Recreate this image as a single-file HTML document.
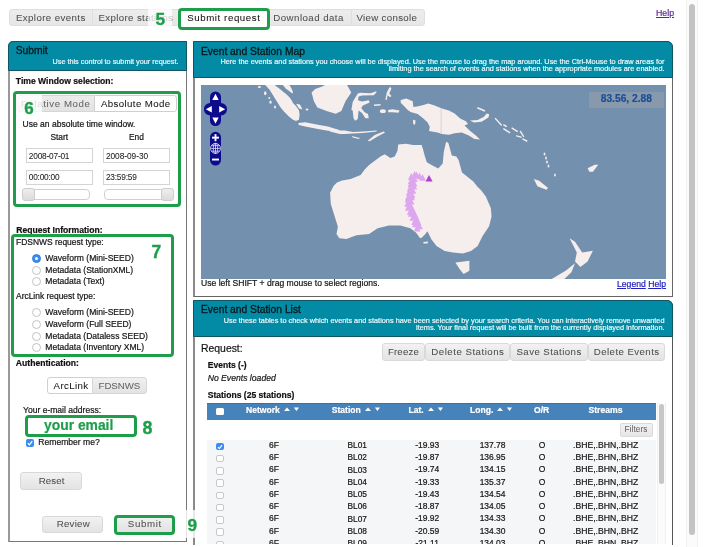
<!DOCTYPE html>
<html><head><meta charset="utf-8">
<style>
*{box-sizing:border-box;margin:0;padding:0}
html,body{will-change:transform;width:705px;height:547px;overflow:hidden;background:#fff;font-family:"Liberation Sans",sans-serif;color:#222}
.a{position:absolute;white-space:nowrap;-webkit-text-stroke:0.2px currentColor}
.g{-webkit-text-stroke:0.6px currentColor}
</style></head><body>
<div class="a" style="left:9px;top:9px;width:84px;height:17px;background:linear-gradient(#ededed,#e6e6e6);border:1px solid #dedede;border-radius:3px 0 0 3px"></div>
<div class="a" style="left:92px;top:9px;width:87px;height:17px;background:linear-gradient(#ededed,#e6e6e6);border:1px solid #dedede;"></div>
<div class="a" style="left:15.9px;top:12.76px;font-size:9.700px;line-height:9.700px;font-weight:normal;color:#4e4e4e;font-style:normal;letter-spacing:0.410px;-webkit-text-stroke:0.05px currentColor">Explore events</div>
<div class="a" style="left:98.4px;top:12.76px;font-size:9.700px;line-height:9.700px;font-weight:normal;color:#4e4e4e;font-style:normal;letter-spacing:0.372px;-webkit-text-stroke:0.05px currentColor">Explore stations</div>
<div class="a" style="left:148px;top:9px;width:23.5px;height:17.5px;background:rgba(255,255,255,.75)"></div>
<div class="a" style="left:156px;top:20.15px;font-size:1.000px;line-height:1.000px;font-weight:normal;color:#151515;font-style:normal;"></div>
<div class="a" style="left:268px;top:9px;width:84px;height:17px;background:linear-gradient(#ededed,#e6e6e6);border:1px solid #dedede;"></div>
<div class="a" style="left:351px;top:9px;width:74px;height:17px;background:linear-gradient(#ededed,#e6e6e6);border:1px solid #dedede;border-radius:0 3px 3px 0"></div>
<div class="a" style="left:273.3px;top:12.76px;font-size:9.700px;line-height:9.700px;font-weight:normal;color:#4e4e4e;font-style:normal;letter-spacing:0.454px;-webkit-text-stroke:0.05px currentColor">Download data</div>
<div class="a" style="left:356.5px;top:12.76px;font-size:9.700px;line-height:9.700px;font-weight:normal;color:#4e4e4e;font-style:normal;letter-spacing:0.319px;-webkit-text-stroke:0.05px currentColor">View console</div>
<div class="a" style="left:178px;top:8px;width:92px;height:22px;background:#fff;border:3px solid #1e9e4a;border-radius:4px"></div>
<div class="a" style="left:187.2px;top:12.76px;font-size:9.700px;line-height:9.700px;font-weight:normal;color:#111;font-style:normal;letter-spacing:0.582px;-webkit-text-stroke:0.05px currentColor">Submit request</div>
<div class="a" style="left:155.6px;top:10.99px;font-size:17.300px;line-height:17.300px;font-weight:bold;color:#1e9e4a;font-style:normal;-webkit-text-stroke:0.35px currentColor">5</div>
<div class="a" style="left:656px;top:9.12px;font-size:8.800px;line-height:8.800px;font-weight:normal;color:#5a2b8f;font-style:normal;text-decoration:underline">Help</div>
<div class="a" style="left:686px;top:0px;width:12px;height:547px;background:#fbfbfb;border-left:1px solid #f0f0f0;border-right:1px solid #f0f0f0"></div>
<div class="a" style="left:689px;top:4px;width:6px;height:531px;background:#c3c3c3;border-radius:3px"></div>
<div class="a" style="left:8px;top:41px;width:179px;height:501px;border:1px solid #777;border-left:2px solid #999;border-radius:5px 0 0 0"></div>
<div class="a" style="left:8px;top:41px;width:179px;height:30px;background:#038aa4;border-radius:5px 0 0 0;border:1px solid #0e5663"></div>
<div class="a" style="left:15.7px;top:46.45px;font-size:10.300px;line-height:10.300px;font-weight:normal;color:#07181c;font-style:normal;-webkit-text-stroke:0.3px currentColor">Submit</div>
<div class="a" style="left:-521.50px;top:58.12px;width:700px;text-align:right;font-size:7.270px;line-height:7.270px;font-weight:normal;color:#e9f7f9;">Use this control to submit your request.</div>
<div class="a" style="left:15.8px;top:77.19px;font-size:8.600px;line-height:8.600px;font-weight:bold;color:#111;font-style:normal;">Time Window selection:</div>
<div class="a" style="left:13px;top:91px;width:168px;height:116px;border:3px solid #1e9e4a;border-radius:4px"></div>
<div class="a" style="left:16px;top:95px;width:79px;height:17px;background:linear-gradient(#ececec,#e2e2e2);border:1px solid #d6d6d6;border-radius:3px 0 0 3px"></div>
<div class="a" style="left:20.900000000000006px;top:99.45px;font-size:9.700px;line-height:9.700px;font-weight:normal;color:#666;font-style:normal;letter-spacing:0.593px;-webkit-text-stroke:0.05px currentColor">Relative Mode</div>
<div class="a" style="left:16px;top:95px;width:26px;height:17px;background:rgba(255,255,255,.8)"></div>
<div class="a" style="left:94px;top:95px;width:83px;height:17px;background:#fff;border:1px solid #cfcfcf;border-radius:0 3px 3px 0"></div>
<div class="a" style="left:101.0px;top:99.45px;font-size:9.700px;line-height:9.700px;font-weight:normal;color:#151515;font-style:normal;letter-spacing:0.367px;-webkit-text-stroke:0.05px currentColor">Absolute Mode</div>
<div class="a" style="left:24.2px;top:99.85px;font-size:17.000px;line-height:17.000px;font-weight:bold;color:#1e9e4a;font-style:normal;-webkit-text-stroke:0.35px currentColor">6</div>
<div class="a" style="left:22.5px;top:119.74px;font-size:8.540px;line-height:8.540px;font-weight:normal;color:#151515;font-style:normal;">Use an absolute time window.</div>
<div class="a" style="left:50.4px;top:132.88px;font-size:8.380px;line-height:8.380px;font-weight:normal;color:#151515;font-style:normal;">Start</div>
<div class="a" style="left:129px;top:132.88px;font-size:8.380px;line-height:8.380px;font-weight:normal;color:#151515;font-style:normal;">End</div>
<div class="a" style="left:26px;top:148px;width:67px;height:15px;background:#fff;border:1px solid #d4d4d4;"></div>
<div class="a" style="left:28.8px;top:151.64px;font-size:8.300px;line-height:8.300px;font-weight:normal;color:#222;font-style:normal;letter-spacing:-0.195px;-webkit-text-stroke:0.05px currentColor">2008-07-01</div>
<div class="a" style="left:103px;top:148px;width:67px;height:15px;background:#fff;border:1px solid #d4d4d4;"></div>
<div class="a" style="left:105.9px;top:151.64px;font-size:8.300px;line-height:8.300px;font-weight:normal;color:#222;font-style:normal;letter-spacing:-0.017px;-webkit-text-stroke:0.05px currentColor">2008-09-30</div>
<div class="a" style="left:26px;top:170px;width:67px;height:15px;background:#fff;border:1px solid #d4d4d4;"></div>
<div class="a" style="left:28.8px;top:172.94px;font-size:8.300px;line-height:8.300px;font-weight:normal;color:#222;font-style:normal;letter-spacing:-0.218px;-webkit-text-stroke:0.05px currentColor">00:00:00</div>
<div class="a" style="left:103px;top:170px;width:67px;height:15px;background:#fff;border:1px solid #d4d4d4;"></div>
<div class="a" style="left:105.9px;top:172.94px;font-size:8.300px;line-height:8.300px;font-weight:normal;color:#222;font-style:normal;letter-spacing:-0.204px;-webkit-text-stroke:0.05px currentColor">23:59:59</div>
<div class="a" style="left:22px;top:189px;width:68px;height:11px;background:#fff;border:1px solid #cfcfcf;border-radius:4px;"></div>
<div class="a" style="left:22px;top:188px;width:13px;height:13px;background:linear-gradient(#eee,#dcdcdc);border:1px solid #cdcdcd;border-radius:3px;"></div>
<div class="a" style="left:104px;top:189px;width:69px;height:11px;background:#fff;border:1px solid #cfcfcf;border-radius:4px;"></div>
<div class="a" style="left:161px;top:188px;width:13px;height:13px;background:linear-gradient(#eee,#dcdcdc);border:1px solid #cdcdcd;border-radius:3px;"></div>
<div class="a" style="left:16.3px;top:225.71px;font-size:8.580px;line-height:8.580px;font-weight:bold;color:#111;font-style:normal;">Request Information:</div>
<div class="a" style="left:11px;top:234px;width:163px;height:123px;border:3px solid #1e9e4a;border-radius:4px"></div>
<div class="a" style="left:16px;top:238.32px;font-size:8.450px;line-height:8.450px;font-weight:normal;color:#151515;font-style:normal;">FDSNWS request type:</div>
<div class="a" style="left:151.6px;top:244.43px;font-size:17.500px;line-height:17.500px;font-weight:bold;color:#1e9e4a;font-style:normal;-webkit-text-stroke:0.35px currentColor">7</div>
<div class="a" style="left:31.5px;top:253.8px;width:9.0px;height:9.0px;background:#3b8cf0;border-radius:50%;border:1px solid #2f7de0"></div>
<div class="a" style="left:34.5px;top:256.8px;width:3.0px;height:3.0px;background:#fff;border-radius:50%"></div>
<div class="a" style="left:45.3px;top:253.92px;font-size:8.560px;line-height:8.560px;font-weight:normal;color:#151515;font-style:normal;">Waveform (Mini-SEED)</div>
<div class="a" style="left:31.5px;top:265.5px;width:9.0px;height:9.0px;background:#fff;border-radius:50%;border:1px solid #c2c2c2"></div>
<div class="a" style="left:45.3px;top:265.62px;font-size:8.560px;line-height:8.560px;font-weight:normal;color:#151515;font-style:normal;">Metadata (StationXML)</div>
<div class="a" style="left:31.5px;top:277.2px;width:9.0px;height:9.0px;background:#fff;border-radius:50%;border:1px solid #c2c2c2"></div>
<div class="a" style="left:45.3px;top:277.32px;font-size:8.560px;line-height:8.560px;font-weight:normal;color:#151515;font-style:normal;">Metadata (Text)</div>
<div class="a" style="left:31.5px;top:308.1px;width:9.0px;height:9.0px;background:#fff;border-radius:50%;border:1px solid #c2c2c2"></div>
<div class="a" style="left:45.3px;top:308.22px;font-size:8.560px;line-height:8.560px;font-weight:normal;color:#151515;font-style:normal;">Waveform (Mini-SEED)</div>
<div class="a" style="left:31.5px;top:319.9px;width:9.0px;height:9.0px;background:#fff;border-radius:50%;border:1px solid #c2c2c2"></div>
<div class="a" style="left:45.3px;top:320.02px;font-size:8.560px;line-height:8.560px;font-weight:normal;color:#151515;font-style:normal;">Waveform (Full SEED)</div>
<div class="a" style="left:31.5px;top:331.5px;width:9.0px;height:9.0px;background:#fff;border-radius:50%;border:1px solid #c2c2c2"></div>
<div class="a" style="left:45.3px;top:331.62px;font-size:8.560px;line-height:8.560px;font-weight:normal;color:#151515;font-style:normal;">Metadata (Dataless SEED)</div>
<div class="a" style="left:31.5px;top:342.9px;width:9.0px;height:9.0px;background:#fff;border-radius:50%;border:1px solid #c2c2c2"></div>
<div class="a" style="left:45.3px;top:343.02px;font-size:8.560px;line-height:8.560px;font-weight:normal;color:#151515;font-style:normal;">Metadata (Inventory XML)</div>
<div class="a" style="left:16px;top:292.42px;font-size:8.450px;line-height:8.450px;font-weight:normal;color:#151515;font-style:normal;">ArcLink request type:</div>
<div class="a" style="left:15.8px;top:358.67px;font-size:8.620px;line-height:8.620px;font-weight:bold;color:#111;font-style:normal;">Authentication:</div>
<div class="a" style="left:47px;top:377px;width:46px;height:17px;background:#fff;border:1px solid #d0d0d0;border-radius:3px 0 0 3px"></div>
<div class="a" style="left:92px;top:377px;width:55px;height:17px;background:linear-gradient(#efefef,#e3e3e3);border:1px solid #d6d6d6;border-radius:0 3px 3px 0"></div>
<div class="a" style="left:53.6px;top:381.06px;font-size:9.700px;line-height:9.700px;font-weight:normal;color:#151515;font-style:normal;letter-spacing:0.367px;-webkit-text-stroke:0.05px currentColor">ArcLink</div>
<div class="a" style="left:98.6px;top:381.06px;font-size:9.700px;line-height:9.700px;font-weight:normal;color:#666;font-style:normal;letter-spacing:-0.070px;-webkit-text-stroke:0.05px currentColor">FDSNWS</div>
<div class="a" style="left:23px;top:405.72px;font-size:8.560px;line-height:8.560px;font-weight:normal;color:#151515;font-style:normal;">Your e-mail address:</div>
<div class="a" style="left:25px;top:415px;width:112px;height:22px;border:3px solid #1e9e4a;border-radius:4px;background:#fff"></div>
<div class="a" style="left:44px;top:418.52px;font-size:13.860px;line-height:13.860px;font-weight:bold;color:#1e9e4a;font-style:normal;">your email</div>
<div class="a" style="left:142.6px;top:419.87px;font-size:17.800px;line-height:17.800px;font-weight:bold;color:#1e9e4a;font-style:normal;-webkit-text-stroke:0.35px currentColor">8</div>
<div class="a" style="left:26px;top:439px;width:8px;height:8px;background:#3b8cf0;border-radius:2px"></div>
<svg class="a" style="left:26px;top:439px" width="8" height="8"><path d="M1.8 4.2 L3.4 5.8 L6.3 2.2" stroke="#fff" stroke-width="1.3" fill="none"/></svg>
<div class="a" style="left:38.3px;top:438.32px;font-size:8.570px;line-height:8.570px;font-weight:normal;color:#151515;font-style:normal;">Remember me?</div>
<div class="a" style="left:20px;top:472px;width:62px;height:18px;background:linear-gradient(#f2f2f2,#e3e3e3);border:1px solid #d9d9d9;border-radius:3px;"></div>
<div class="a" style="left:38.7px;top:476.06px;font-size:9.700px;line-height:9.700px;font-weight:normal;color:#4e4e4e;font-style:normal;letter-spacing:0.121px;-webkit-text-stroke:0.05px currentColor">Reset</div>
<div class="a" style="left:42px;top:516px;width:61px;height:17px;background:linear-gradient(#f2f2f2,#e3e3e3);border:1px solid #d9d9d9;border-radius:3px;"></div>
<div class="a" style="left:56.7px;top:518.55px;font-size:9.700px;line-height:9.700px;font-weight:normal;color:#4e4e4e;font-style:normal;letter-spacing:0.237px;-webkit-text-stroke:0.05px currentColor">Review</div>
<div class="a" style="left:114px;top:515px;width:61px;height:20px;background:linear-gradient(#f0f0f0,#e2e2e2);border:3px solid #1e9e4a;border-radius:4px"></div>
<div class="a" style="left:127.8px;top:518.75px;font-size:9.700px;line-height:9.700px;font-weight:normal;color:#4e4e4e;font-style:normal;letter-spacing:0.667px;-webkit-text-stroke:0.05px currentColor">Submit</div>
<div class="a" style="left:193px;top:41px;width:480px;height:256px;border:1px solid #666;border-left:2px solid #8a8a8a;border-radius:0 6px 0 0"></div>
<div class="a" style="left:193px;top:41px;width:480px;height:37px;background:#038aa4;border-radius:0 6px 0 0;border:1px solid #0e5663"></div>
<div class="a" style="left:201px;top:46.86px;font-size:10.280px;line-height:10.280px;font-weight:normal;color:#07181c;font-style:normal;-webkit-text-stroke:0.3px currentColor">Event and Station Map</div>
<div class="a" style="left:-35.50px;top:57.97px;width:700px;text-align:right;font-size:7.330px;line-height:7.330px;font-weight:normal;color:#e9f7f9;">Here the events and stations you choose will be displayed. Use the mouse to drag the map around. Use the Ctrl-Mouse to draw areas for</div>
<div class="a" style="left:-35.50px;top:65.47px;width:700px;text-align:right;font-size:7.330px;line-height:7.330px;font-weight:normal;color:#e9f7f9;">limiting the search of events and stations when the appropriate modules are enabled.</div>
<svg class="a" style="left:201px;top:85px" width="465" height="194" viewBox="201 85 465 194"><rect x="201" y="85" width="465" height="194" fill="#7391ae"/><polygon fill="#f6eded" points="265.2,85.0 269.6,89.8 273.3,95.7 276.9,101.5 280.6,107.4 284.2,111.8 288.6,116.2 293.0,119.8 295.9,120.9 298.9,119.8 299.6,114.7 298.9,110.3 295.9,105.9 293.0,103.0 291.5,100.1 289.4,97.2 286.4,94.2 283.5,92.0 279.9,89.1 276.2,86.2 274.7,85.0"/><polygon fill="#f6eded" points="296.0,103.7 300.0,104.5 302.5,109.6 299.0,108.5"/><polygon fill="#f6eded" points="282.8,85.0 289.4,85.0 291.5,88.4 293.0,92.0 292.3,93.5 289.4,91.3 285.7,88.4"/><polygon fill="#f6eded" points="298.2,123.0 305.2,122.3 316.6,124.4 327.9,126.6 339.3,130.1 339.3,132.2 327.9,130.8 316.6,128.7 305.2,126.6 298.9,125.1"/><polygon fill="#f6eded" points="311.6,92.5 315.2,89.0 321.6,86.8 325.1,85.0 347.0,85.0 351.3,92.5 345.6,101.0 341.3,111.0 335.7,113.8 326.5,110.9 317.3,107.4 313.8,101.0"/><polygon fill="#f6eded" points="330.0,127.9 334.0,128.9 339.9,130.4 344.9,130.4 352.8,131.9 362.8,131.4 376.7,130.4 376.7,131.6 362.8,132.9 352.8,133.4 344.9,133.9 339.9,133.9 334.0,132.4 330.0,131.4"/><polygon fill="#f6eded" points="351.8,135.9 359.8,137.9 358.8,139.0 352.8,137.4"/><polygon fill="#f6eded" points="367.7,140.8 374.7,134.9 383.6,131.4 385.1,132.4 376.7,136.9 369.7,141.3"/><polygon fill="#f6eded" points="375.6,91.4 376.9,91.8 373.9,95.2 362.0,95.6 358.6,96.5 358.0,100.3 362.0,101.6 368.8,100.3 369.7,102.4 362.9,105.4 361.2,108.0 364.6,112.2 368.0,113.9 368.8,118.2 365.4,118.2 362.0,113.1 358.6,110.5 357.8,119.0 355.2,120.7 353.5,118.2 352.7,110.5 351.4,109.7 352.7,102.0 355.2,97.8 357.8,93.5 360.3,92.7 370.5,93.2"/><polygon fill="#f6eded" points="390.1,86.7 391.4,88.4 389.3,93.5 391.4,96.1 390.1,97.3 387.6,95.2 386.7,100.3 385.4,99.5 386.7,92.7 388.4,89.3"/><polygon fill="#f6eded" points="388.0,110.1 392.7,109.3 399.5,110.5 398.6,112.7 392.7,112.2 388.4,112.2"/><ellipse cx="382.9" cy="111.2" rx="3" ry="1.9" fill="#f6eded"/><polygon fill="#f6eded" points="374.0,104.5 380.5,104.0 380.5,105.5 374.0,106.0"/><ellipse cx="259.4" cy="87" rx="1.6" ry="1" fill="#f6eded"/><ellipse cx="265.2" cy="93.2" rx="1.2" ry="2" fill="#f6eded"/><ellipse cx="269.3" cy="98" rx="1" ry="1" fill="#f6eded"/><ellipse cx="270.5" cy="102.2" rx="1.1" ry="1.6" fill="#f6eded"/><ellipse cx="275" cy="107" rx="1" ry="1.6" fill="#f6eded"/><ellipse cx="307" cy="109.5" rx="1.4" ry="1" fill="#f6eded"/><polygon fill="#f6eded" points="400.7,99.9 406.3,98.5 412.7,101.3 413.4,107.0 418.4,106.3 423.4,104.9 428.3,103.5 434.7,105.6 441.8,108.4 448.9,110.6 454.6,113.4 460.2,118.4 465.9,121.2 468.0,124.0 464.5,125.5 470.2,131.1 475.9,135.4 480.1,139.6 474.4,138.9 468.8,135.4 461.7,132.6 454.6,133.3 448.9,134.7 441.8,134.0 437.6,132.6 433.3,131.8 429.0,131.1 429.8,126.9 427.6,122.6 423.4,118.4 417.7,114.1 410.6,112.0 407.8,109.9 403.5,105.6 400.7,102.8"/><polygon fill="#f6eded" points="413.0,119.8 415.6,120.5 415.0,124.8 413.2,124.0"/><line x1="441.1" y1="108.4" x2="441.1" y2="134" stroke="#c9bfc2" stroke-width="0.6"/><polygon fill="#f6eded" points="470.0,120.5 477.7,119.9 484.0,116.7 486.6,113.5 489.2,114.2 488.5,117.4 481.5,121.8 473.8,122.5"/><polygon fill="#f6eded" points="477.7,107.1 485.3,110.3 484.7,111.8 477.0,108.6"/><line x1="495.5" y1="118.6" x2="501.3" y2="125" stroke="#f6eded" stroke-width="1.4" stroke-linecap="round"/><line x1="503.8" y1="125" x2="506.4" y2="126.3" stroke="#f6eded" stroke-width="1.4" stroke-linecap="round"/><line x1="503.8" y1="128.8" x2="509.6" y2="132.7" stroke="#f6eded" stroke-width="1.4" stroke-linecap="round"/><line x1="512.1" y1="128.2" x2="517.3" y2="131.4" stroke="#f6eded" stroke-width="1.4" stroke-linecap="round"/><line x1="520.4" y1="131.4" x2="523.6" y2="136.5" stroke="#f6eded" stroke-width="1.4" stroke-linecap="round"/><line x1="516.6" y1="135.9" x2="521.1" y2="137.1" stroke="#f6eded" stroke-width="1.4" stroke-linecap="round"/><line x1="523" y1="139.1" x2="526.8" y2="141" stroke="#f6eded" stroke-width="1.4" stroke-linecap="round"/><polygon fill="#f6eded" points="339.3,238.2 336.5,233.9 337.9,226.8 334.4,215.5 330.8,204.1 330.1,192.8 333.7,185.7 337.0,182.5 342.2,180.6 350.7,179.1 360.6,174.9 364.9,169.2 369.1,165.0 374.8,160.7 380.5,156.4 384.7,154.3 390.4,157.9 394.7,156.4 397.5,150.8 398.2,144.4 406.0,143.7 413.1,145.1 421.6,145.1 423.0,149.3 424.5,155.0 426.8,162.2 432.5,165.6 438.2,168.5 442.7,163.4 443.8,152.0 446.1,141.8 448.4,142.9 451.8,155.4 456.3,156.6 458.6,160.0 462.0,172.4 467.7,177.0 473.3,181.5 477.9,187.2 480.9,190.0 485.8,196.6 490.8,208.1 491.6,216.3 489.1,226.2 482.6,236.1 477.6,246.0 471.0,250.9 462.8,253.4 452.9,252.6 444.7,250.9 436.5,246.0 431.5,239.4 427.4,231.2 424.9,234.4 421.6,237.7 420.2,238.2 415.9,232.5 410.3,228.2 400.3,225.4 389.0,225.4 377.6,228.2 369.1,233.9 356.4,235.3 346.4,238.9"/><polygon fill="#f6eded" points="423.3,242.0 428.2,241.6 427.5,243.5 423.5,243.6"/><polygon fill="#f6eded" points="455.4,262.4 469.4,260.8 469.4,270.7 463.6,274.0 459.5,269.0"/><polygon fill="#f6eded" points="569.6,238.2 575.0,241.8 582.2,252.5 592.9,250.7 587.6,261.5 580.4,266.9 575.0,261.5 576.8,252.5"/><polygon fill="#f6eded" points="575.0,263.3 566.0,270.4 551.7,279.0 564.3,279.0 571.4,272.2"/><polygon fill="#f6eded" points="533.8,179.0 539.2,180.8 548.1,188.0 546.3,189.8 537.4,186.2"/><polygon fill="#f6eded" points="587.6,168.3 594.7,164.7 598.3,164.7 592.9,171.8 589.4,171.8"/><ellipse cx="544.5" cy="154" rx="0.9" ry="1.6" fill="#f6eded"/><ellipse cx="546" cy="158" rx="0.9" ry="1.6" fill="#f6eded"/><ellipse cx="547" cy="162" rx="0.9" ry="1.6" fill="#f6eded"/><ellipse cx="548.5" cy="166" rx="0.9" ry="1.6" fill="#f6eded"/><ellipse cx="555" cy="175" rx="0.9" ry="1.6" fill="#f6eded"/><polygon fill="#dda6ee" points="411.2,177.7 414.6,170.9 418.0,177.7"/><polygon fill="#dda6ee" points="407.9,179.9 411.3,173.1 414.7,179.9"/><polygon fill="#dda6ee" points="411.0,182.1 414.4,175.3 417.8,182.1"/><polygon fill="#dda6ee" points="407.7,184.3 411.1,177.5 414.5,184.3"/><polygon fill="#dda6ee" points="410.7,186.5 414.1,179.7 417.5,186.5"/><polygon fill="#dda6ee" points="407.5,187.2 410.9,180.4 414.3,187.2"/><polygon fill="#dda6ee" points="410.3,189.4 413.7,182.6 417.1,189.4"/><polygon fill="#dda6ee" points="406.7,191.5 410.1,184.7 413.5,191.5"/><polygon fill="#dda6ee" points="409.5,193.7 412.9,186.9 416.3,193.7"/><polygon fill="#dda6ee" points="405.8,195.8 409.2,189.0 412.6,195.8"/><polygon fill="#dda6ee" points="408.6,198.0 412.0,191.2 415.4,198.0"/><polygon fill="#dda6ee" points="405.0,200.2 408.4,193.4 411.8,200.2"/><polygon fill="#dda6ee" points="408.2,200.2 411.6,193.4 415.0,200.2"/><polygon fill="#dda6ee" points="404.7,202.4 408.1,195.6 411.5,202.4"/><polygon fill="#dda6ee" points="407.7,204.6 411.1,197.8 414.5,204.6"/><polygon fill="#dda6ee" points="404.2,206.8 407.6,200.0 411.0,206.8"/><polygon fill="#dda6ee" points="407.2,208.7 410.6,201.9 414.0,208.7"/><polygon fill="#dda6ee" points="404.9,210.7 408.3,203.9 411.7,210.7"/><polygon fill="#dda6ee" points="409.1,212.7 412.5,205.9 415.9,212.7"/><polygon fill="#dda6ee" points="406.8,214.7 410.2,207.9 413.6,214.7"/><polygon fill="#dda6ee" points="410.9,216.7 414.3,209.9 417.7,216.7"/><polygon fill="#dda6ee" points="407.8,216.8 411.2,210.0 414.6,216.8"/><polygon fill="#dda6ee" points="411.9,218.8 415.3,212.0 418.7,218.8"/><polygon fill="#dda6ee" points="409.5,220.8 412.9,214.0 416.3,220.8"/><polygon fill="#dda6ee" points="413.6,222.9 417.0,216.1 420.4,222.9"/><polygon fill="#dda6ee" points="411.3,224.9 414.7,218.1 418.1,224.9"/><polygon fill="#dda6ee" points="414.6,225.2 418.0,218.4 421.4,225.2"/><polygon fill="#dda6ee" points="412.2,227.3 415.6,220.5 419.0,227.3"/><polygon fill="#dda6ee" points="416.1,229.3 419.5,222.5 422.9,229.3"/><polygon fill="#dda6ee" points="413.7,231.4 417.1,224.6 420.5,231.4"/><polygon fill="#dda6ee" points="413.1,178.2 416.5,171.4 419.9,178.2"/><polygon fill="#dda6ee" points="416.1,179.2 419.5,172.4 422.9,179.2"/><polygon fill="#dda6ee" points="419.1,180.7 422.5,173.9 425.9,180.7"/><polygon fill="#b13fd2" points="425.5,181.5 429,175 432.6,181.5"/></svg>
<svg class="a" style="left:203px;top:90px" width="26" height="78" viewBox="203 90 26 78">
<g fill="#0b0b8c">
<rect x="210" y="91.5" width="11" height="34.5" rx="5.5"/>
<rect x="204" y="103" width="23" height="12.5" rx="6.2"/>
<rect x="210" y="131.8" width="11" height="33.8" rx="5.5"/>
</g>
<g fill="#fff">
<polygon points="215.5,93.8 212.3,100 218.7,100"/>
<polygon points="215.5,123.8 212.3,117.6 218.7,117.6"/>
<polygon points="205.8,109.3 211.8,106.1 211.8,112.5"/>
<polygon points="225.2,109.3 219.2,106.1 219.2,112.5"/>
<rect x="212" y="136.7" width="7" height="1.9"/><rect x="214.55" y="134.15" width="1.9" height="7"/>
<rect x="212" y="158.6" width="7" height="1.9"/>
</g>
<g fill="none" stroke="#e8e8ff" stroke-width="0.75">
<circle cx="215.5" cy="148.4" r="5"/>
<ellipse cx="215.5" cy="148.4" rx="2.2" ry="5"/>
<line x1="210.5" y1="148.4" x2="220.5" y2="148.4"/>
<line x1="211.3" y1="145.7" x2="219.7" y2="145.7"/><line x1="211.3" y1="151.1" x2="219.7" y2="151.1"/>
<line x1="215.5" y1="143.4" x2="215.5" y2="153.4"/>
</g>
</svg>
<div class="a" style="left:589px;top:91.5px;width:75.29999999999995px;height:16.5px;background:rgba(165,165,170,.45)"></div>
<div class="a" style="left:600.7px;top:94.49px;font-size:10.250px;line-height:10.250px;font-weight:bold;color:#1b4f98;font-style:normal;">83.56, 2.88</div>
<div class="a" style="left:201px;top:279.18px;font-size:8.610px;line-height:8.610px;font-weight:normal;color:#151515;font-style:normal;">Use left SHIFT + drag mouse to select regions.</div>
<div class="a" style="left:617px;top:279.66px;font-size:8.640px;line-height:8.640px;font-weight:normal;color:#2020c0;font-style:normal;"><u>Legend</u> <u>Help</u></div>
<div class="a" style="left:193px;top:300px;width:480px;height:245px;border:1px solid #555;border-left:2px solid #8a8a8a;border-bottom:none;border-radius:0 6px 0 0"></div>
<div class="a" style="left:193px;top:300px;width:480px;height:37px;background:#038aa4;border-radius:0 6px 0 0;border:1px solid #0e5663"></div>
<div class="a" style="left:201px;top:305.26px;font-size:10.280px;line-height:10.280px;font-weight:normal;color:#07181c;font-style:normal;-webkit-text-stroke:0.3px currentColor">Event and Station List</div>
<div class="a" style="left:-35.50px;top:316.77px;width:700px;text-align:right;font-size:7.330px;line-height:7.330px;font-weight:normal;color:#e9f7f9;">Use these tables to check which events and stations have been selected by your search criteria. You can interactively remove unwanted</div>
<div class="a" style="left:-35.50px;top:324.27px;width:700px;text-align:right;font-size:7.330px;line-height:7.330px;font-weight:normal;color:#e9f7f9;">items. Your final request will be built from the currently displayed information.</div>
<div class="a" style="left:201px;top:343.54px;font-size:10.420px;line-height:10.420px;font-weight:normal;color:#151515;font-style:normal;">Request:</div>
<div class="a" style="left:382px;top:343px;width:42.5px;height:18px;background:linear-gradient(#f2f2f2,#e3e3e3);border:1px solid #d9d9d9;border-radius:3px;"></div>
<div class="a" style="left:425px;top:343px;width:84.5px;height:18px;background:linear-gradient(#f2f2f2,#e3e3e3);border:1px solid #d9d9d9;border-radius:3px;"></div>
<div class="a" style="left:510px;top:343px;width:77.5px;height:18px;background:linear-gradient(#f2f2f2,#e3e3e3);border:1px solid #d9d9d9;border-radius:3px;"></div>
<div class="a" style="left:588px;top:343px;width:77px;height:18px;background:linear-gradient(#f2f2f2,#e3e3e3);border:1px solid #d9d9d9;border-radius:3px;"></div>
<div class="a" style="left:387.9px;top:347.36px;font-size:9.700px;line-height:9.700px;font-weight:normal;color:#4e4e4e;font-style:normal;letter-spacing:0.167px;-webkit-text-stroke:0.05px currentColor">Freeze</div>
<div class="a" style="left:431.3px;top:347.36px;font-size:9.700px;line-height:9.700px;font-weight:normal;color:#4e4e4e;font-style:normal;letter-spacing:0.495px;-webkit-text-stroke:0.05px currentColor">Delete Stations</div>
<div class="a" style="left:516.5px;top:347.36px;font-size:9.700px;line-height:9.700px;font-weight:normal;color:#4e4e4e;font-style:normal;letter-spacing:0.413px;-webkit-text-stroke:0.05px currentColor">Save Stations</div>
<div class="a" style="left:593.8px;top:347.36px;font-size:9.700px;line-height:9.700px;font-weight:normal;color:#4e4e4e;font-style:normal;letter-spacing:0.418px;-webkit-text-stroke:0.05px currentColor">Delete Events</div>
<div class="a" style="left:207.8px;top:361.36px;font-size:8.520px;line-height:8.520px;font-weight:bold;color:#111;font-style:normal;">Events (-)</div>
<div class="a" style="left:207.7px;top:374.05px;font-size:8.650px;line-height:8.650px;font-weight:normal;color:#151515;font-style:italic;">No Events loaded</div>
<div class="a" style="left:207.7px;top:391.12px;font-size:8.570px;line-height:8.570px;font-weight:bold;color:#111;font-style:normal;">Stations (25 stations)</div>
<div class="a" style="left:207px;top:403px;width:449px;height:17px;background:#4683ba;border-top:1px solid #3b70a3"></div>
<div class="a" style="left:216px;top:407.5px;width:7.5px;height:7.5px;background:#fff;border-radius:1.5px"></div>
<div class="a" style="left:246.0px;top:406.02px;font-size:8.560px;line-height:8.560px;font-weight:bold;color:#fff;font-style:normal;">Network</div>
<svg class="a" style="left:283.61px;top:407px" width="16" height="6"><polygon points="0,4 3,0.5 6,4" fill="#fff"/><polygon points="9.9,0.6 15,0.6 12.45,4.1" fill="#fff"/></svg>
<div class="a" style="left:331.8px;top:406.02px;font-size:8.560px;line-height:8.560px;font-weight:bold;color:#fff;font-style:normal;">Station</div>
<svg class="a" style="left:364.62px;top:407px" width="16" height="6"><polygon points="0,4 3,0.5 6,4" fill="#fff"/><polygon points="9.9,0.6 15,0.6 12.45,4.1" fill="#fff"/></svg>
<div class="a" style="left:408.5px;top:406.02px;font-size:8.560px;line-height:8.560px;font-weight:bold;color:#fff;font-style:normal;">Lat.</div>
<svg class="a" style="left:427.54px;top:407px" width="16" height="6"><polygon points="0,4 3,0.5 6,4" fill="#fff"/><polygon points="9.9,0.6 15,0.6 12.45,4.1" fill="#fff"/></svg>
<div class="a" style="left:470.0px;top:406.02px;font-size:8.560px;line-height:8.560px;font-weight:bold;color:#fff;font-style:normal;">Long.</div>
<svg class="a" style="left:497.08px;top:407px" width="16" height="6"><polygon points="0,4 3,0.5 6,4" fill="#fff"/><polygon points="9.9,0.6 15,0.6 12.45,4.1" fill="#fff"/></svg>
<div class="a" style="left:534px;top:406.02px;font-size:8.560px;line-height:8.560px;font-weight:bold;color:#fff;font-style:normal;">O/R</div>
<div class="a" style="left:588.5px;top:405.98px;font-size:8.610px;line-height:8.610px;font-weight:bold;color:#fff;font-style:normal;">Streams</div>
<div class="a" style="left:620px;top:423px;width:33px;height:14px;background:linear-gradient(#f2f2f2,#e6e6e6);border:1px solid #dadada;border-radius:2px"></div>
<div class="a" style="left:624.4px;top:426.33px;font-size:8.200px;line-height:8.200px;font-weight:normal;color:#666;font-style:normal;letter-spacing:0.116px;-webkit-text-stroke:0.05px currentColor">Filters</div>
<div class="a" style="left:657px;top:403px;width:9px;height:141px;background:#fbfbfb;border-left:1px solid #efefef;border-right:1px solid #efefef"></div>
<div class="a" style="left:659px;top:403.5px;width:5px;height:80.5px;background:#c6c6c6;border-radius:2.5px"></div>
<div class="a" style="left:207px;top:440px;width:449px;height:104px;background:#f5f6f8"></div>
<div class="a" style="left:0;top:0;width:705px;height:544px;overflow:hidden"><div class="a" style="left:216px;top:442.5px;width:7.5px;height:7.5px;background:#3b8cf0;border-radius:2px"></div>
<svg class="a" style="left:216px;top:442.5px" width="8" height="8"><path d="M1.9 4.1 L3.3 5.6 L6 2.1" stroke="#fff" stroke-width="1.1" fill="none"/></svg>
<div class="a" style="left:214.00px;top:440.88px;width:120px;text-align:center;font-size:8.500px;line-height:8.500px;font-weight:normal;color:#151515;">6F</div>
<div class="a" style="left:297.20px;top:441.05px;width:120px;text-align:center;font-size:8.300px;line-height:8.300px;font-weight:normal;color:#151515;">BL01</div>
<div class="a" style="left:367.20px;top:440.90px;width:120px;text-align:center;font-size:8.470px;line-height:8.470px;font-weight:normal;color:#151515;">-19.93</div>
<div class="a" style="left:432.60px;top:440.90px;width:120px;text-align:center;font-size:8.470px;line-height:8.470px;font-weight:normal;color:#151515;">137.78</div>
<div class="a" style="left:482.00px;top:440.88px;width:120px;text-align:center;font-size:8.500px;line-height:8.500px;font-weight:normal;color:#151515;">O</div>
<div class="a" style="left:545.70px;top:440.75px;width:120px;text-align:center;font-size:8.650px;line-height:8.650px;font-weight:normal;color:#151515;">.BHE,.BHN,.BHZ</div>
<div class="a" style="left:216px;top:454.85px;width:7.5px;height:7.5px;background:#fff;border:1px solid #c8c8c8;border-radius:2px"></div>
<div class="a" style="left:214.00px;top:453.12px;width:120px;text-align:center;font-size:8.500px;line-height:8.500px;font-weight:normal;color:#151515;">6F</div>
<div class="a" style="left:297.20px;top:453.30px;width:120px;text-align:center;font-size:8.300px;line-height:8.300px;font-weight:normal;color:#151515;">BL02</div>
<div class="a" style="left:367.20px;top:453.15px;width:120px;text-align:center;font-size:8.470px;line-height:8.470px;font-weight:normal;color:#151515;">-19.87</div>
<div class="a" style="left:432.60px;top:453.15px;width:120px;text-align:center;font-size:8.470px;line-height:8.470px;font-weight:normal;color:#151515;">136.95</div>
<div class="a" style="left:482.00px;top:453.12px;width:120px;text-align:center;font-size:8.500px;line-height:8.500px;font-weight:normal;color:#151515;">O</div>
<div class="a" style="left:545.70px;top:453.00px;width:120px;text-align:center;font-size:8.650px;line-height:8.650px;font-weight:normal;color:#151515;">.BHE,.BHN,.BHZ</div>
<div class="a" style="left:216px;top:467.1px;width:7.5px;height:7.5px;background:#fff;border:1px solid #c8c8c8;border-radius:2px"></div>
<div class="a" style="left:214.00px;top:465.38px;width:120px;text-align:center;font-size:8.500px;line-height:8.500px;font-weight:normal;color:#151515;">6F</div>
<div class="a" style="left:297.20px;top:465.55px;width:120px;text-align:center;font-size:8.300px;line-height:8.300px;font-weight:normal;color:#151515;">BL03</div>
<div class="a" style="left:367.20px;top:465.40px;width:120px;text-align:center;font-size:8.470px;line-height:8.470px;font-weight:normal;color:#151515;">-19.74</div>
<div class="a" style="left:432.60px;top:465.40px;width:120px;text-align:center;font-size:8.470px;line-height:8.470px;font-weight:normal;color:#151515;">134.15</div>
<div class="a" style="left:482.00px;top:465.38px;width:120px;text-align:center;font-size:8.500px;line-height:8.500px;font-weight:normal;color:#151515;">O</div>
<div class="a" style="left:545.70px;top:465.25px;width:120px;text-align:center;font-size:8.650px;line-height:8.650px;font-weight:normal;color:#151515;">.BHE,.BHN,.BHZ</div>
<div class="a" style="left:216px;top:479.35px;width:7.5px;height:7.5px;background:#fff;border:1px solid #c8c8c8;border-radius:2px"></div>
<div class="a" style="left:214.00px;top:477.62px;width:120px;text-align:center;font-size:8.500px;line-height:8.500px;font-weight:normal;color:#151515;">6F</div>
<div class="a" style="left:297.20px;top:477.80px;width:120px;text-align:center;font-size:8.300px;line-height:8.300px;font-weight:normal;color:#151515;">BL04</div>
<div class="a" style="left:367.20px;top:477.65px;width:120px;text-align:center;font-size:8.470px;line-height:8.470px;font-weight:normal;color:#151515;">-19.33</div>
<div class="a" style="left:432.60px;top:477.65px;width:120px;text-align:center;font-size:8.470px;line-height:8.470px;font-weight:normal;color:#151515;">135.37</div>
<div class="a" style="left:482.00px;top:477.62px;width:120px;text-align:center;font-size:8.500px;line-height:8.500px;font-weight:normal;color:#151515;">O</div>
<div class="a" style="left:545.70px;top:477.50px;width:120px;text-align:center;font-size:8.650px;line-height:8.650px;font-weight:normal;color:#151515;">.BHE,.BHN,.BHZ</div>
<div class="a" style="left:216px;top:491.6px;width:7.5px;height:7.5px;background:#fff;border:1px solid #c8c8c8;border-radius:2px"></div>
<div class="a" style="left:214.00px;top:489.88px;width:120px;text-align:center;font-size:8.500px;line-height:8.500px;font-weight:normal;color:#151515;">6F</div>
<div class="a" style="left:297.20px;top:490.05px;width:120px;text-align:center;font-size:8.300px;line-height:8.300px;font-weight:normal;color:#151515;">BL05</div>
<div class="a" style="left:367.20px;top:489.90px;width:120px;text-align:center;font-size:8.470px;line-height:8.470px;font-weight:normal;color:#151515;">-19.43</div>
<div class="a" style="left:432.60px;top:489.90px;width:120px;text-align:center;font-size:8.470px;line-height:8.470px;font-weight:normal;color:#151515;">134.54</div>
<div class="a" style="left:482.00px;top:489.88px;width:120px;text-align:center;font-size:8.500px;line-height:8.500px;font-weight:normal;color:#151515;">O</div>
<div class="a" style="left:545.70px;top:489.75px;width:120px;text-align:center;font-size:8.650px;line-height:8.650px;font-weight:normal;color:#151515;">.BHE,.BHN,.BHZ</div>
<div class="a" style="left:216px;top:503.85px;width:7.5px;height:7.5px;background:#fff;border:1px solid #c8c8c8;border-radius:2px"></div>
<div class="a" style="left:214.00px;top:502.12px;width:120px;text-align:center;font-size:8.500px;line-height:8.500px;font-weight:normal;color:#151515;">6F</div>
<div class="a" style="left:297.20px;top:502.30px;width:120px;text-align:center;font-size:8.300px;line-height:8.300px;font-weight:normal;color:#151515;">BL06</div>
<div class="a" style="left:367.20px;top:502.15px;width:120px;text-align:center;font-size:8.470px;line-height:8.470px;font-weight:normal;color:#151515;">-18.87</div>
<div class="a" style="left:432.60px;top:502.15px;width:120px;text-align:center;font-size:8.470px;line-height:8.470px;font-weight:normal;color:#151515;">134.05</div>
<div class="a" style="left:482.00px;top:502.12px;width:120px;text-align:center;font-size:8.500px;line-height:8.500px;font-weight:normal;color:#151515;">O</div>
<div class="a" style="left:545.70px;top:502.00px;width:120px;text-align:center;font-size:8.650px;line-height:8.650px;font-weight:normal;color:#151515;">.BHE,.BHN,.BHZ</div>
<div class="a" style="left:216px;top:516.1px;width:7.5px;height:7.5px;background:#fff;border:1px solid #c8c8c8;border-radius:2px"></div>
<div class="a" style="left:214.00px;top:514.38px;width:120px;text-align:center;font-size:8.500px;line-height:8.500px;font-weight:normal;color:#151515;">6F</div>
<div class="a" style="left:297.20px;top:514.55px;width:120px;text-align:center;font-size:8.300px;line-height:8.300px;font-weight:normal;color:#151515;">BL07</div>
<div class="a" style="left:367.20px;top:514.40px;width:120px;text-align:center;font-size:8.470px;line-height:8.470px;font-weight:normal;color:#151515;">-19.92</div>
<div class="a" style="left:432.60px;top:514.40px;width:120px;text-align:center;font-size:8.470px;line-height:8.470px;font-weight:normal;color:#151515;">134.33</div>
<div class="a" style="left:482.00px;top:514.38px;width:120px;text-align:center;font-size:8.500px;line-height:8.500px;font-weight:normal;color:#151515;">O</div>
<div class="a" style="left:545.70px;top:514.25px;width:120px;text-align:center;font-size:8.650px;line-height:8.650px;font-weight:normal;color:#151515;">.BHE,.BHN,.BHZ</div>
<div class="a" style="left:216px;top:528.35px;width:7.5px;height:7.5px;background:#fff;border:1px solid #c8c8c8;border-radius:2px"></div>
<div class="a" style="left:214.00px;top:526.62px;width:120px;text-align:center;font-size:8.500px;line-height:8.500px;font-weight:normal;color:#151515;">6F</div>
<div class="a" style="left:297.20px;top:526.80px;width:120px;text-align:center;font-size:8.300px;line-height:8.300px;font-weight:normal;color:#151515;">BL08</div>
<div class="a" style="left:367.20px;top:526.65px;width:120px;text-align:center;font-size:8.470px;line-height:8.470px;font-weight:normal;color:#151515;">-20.59</div>
<div class="a" style="left:432.60px;top:526.65px;width:120px;text-align:center;font-size:8.470px;line-height:8.470px;font-weight:normal;color:#151515;">134.30</div>
<div class="a" style="left:482.00px;top:526.62px;width:120px;text-align:center;font-size:8.500px;line-height:8.500px;font-weight:normal;color:#151515;">O</div>
<div class="a" style="left:545.70px;top:526.50px;width:120px;text-align:center;font-size:8.650px;line-height:8.650px;font-weight:normal;color:#151515;">.BHE,.BHN,.BHZ</div>
<div class="a" style="left:216px;top:540.6px;width:7.5px;height:7.5px;background:#fff;border:1px solid #c8c8c8;border-radius:2px"></div>
<div class="a" style="left:214.00px;top:538.88px;width:120px;text-align:center;font-size:8.500px;line-height:8.500px;font-weight:normal;color:#151515;">6F</div>
<div class="a" style="left:297.20px;top:539.05px;width:120px;text-align:center;font-size:8.300px;line-height:8.300px;font-weight:normal;color:#151515;">BL09</div>
<div class="a" style="left:367.20px;top:538.90px;width:120px;text-align:center;font-size:8.470px;line-height:8.470px;font-weight:normal;color:#151515;">-21.11</div>
<div class="a" style="left:432.60px;top:538.90px;width:120px;text-align:center;font-size:8.470px;line-height:8.470px;font-weight:normal;color:#151515;">134.03</div>
<div class="a" style="left:482.00px;top:538.88px;width:120px;text-align:center;font-size:8.500px;line-height:8.500px;font-weight:normal;color:#151515;">O</div>
<div class="a" style="left:545.70px;top:538.75px;width:120px;text-align:center;font-size:8.650px;line-height:8.650px;font-weight:normal;color:#151515;">.BHE,.BHN,.BHZ</div>
</div>
<div class="a" style="left:185.5px;top:510px;width:13.5px;height:28px;background:rgba(255,255,255,.8)"></div>
<div class="a" style="left:187.4px;top:517.09px;font-size:17.300px;line-height:17.300px;font-weight:bold;color:#1e9e4a;font-style:normal;-webkit-text-stroke:0.35px currentColor">9</div>
</body></html>
